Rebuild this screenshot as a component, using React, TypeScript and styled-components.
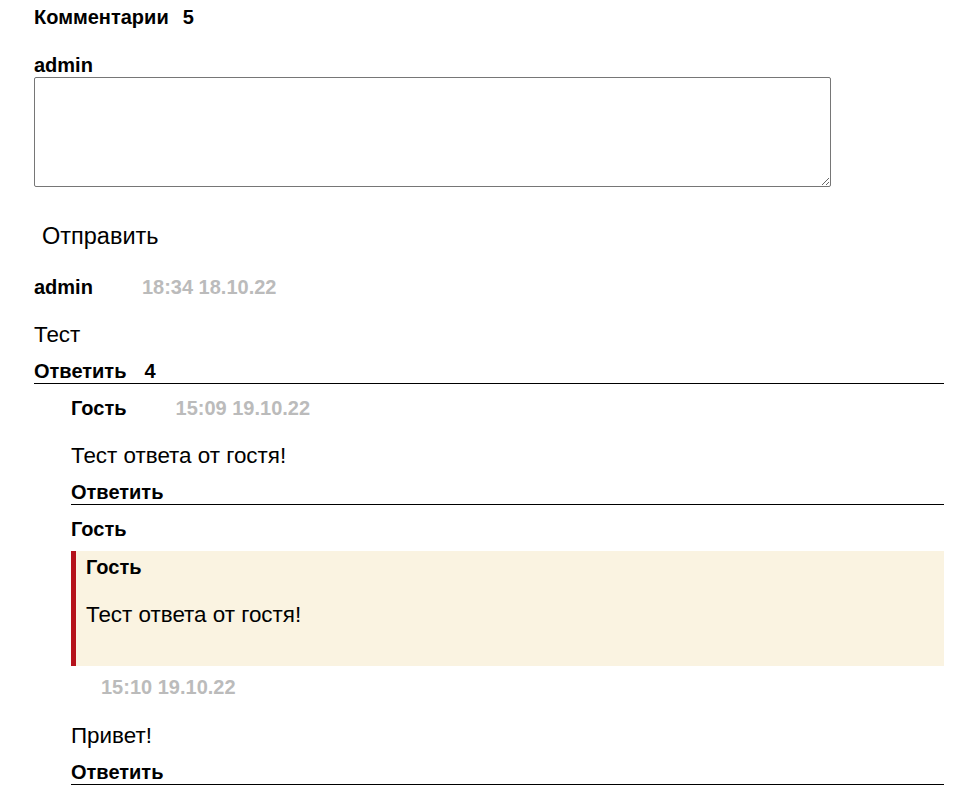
import React from "react";
import styled, { createGlobalStyle } from "styled-components";

const Global = createGlobalStyle`
  html, body { margin: 0; padding: 0; background: #fff; }
  body { font-family: "Liberation Sans", Arial, sans-serif; color: #000; }
`;

const Page = styled.div`
  padding: 5px 12px 0 34px;
`;

const Heading = styled.h3`
  margin: 0;
  font-size: 20px;
  font-weight: bold;
  line-height: 24px;
  display: flex;
  gap: 14px;
`;

const Form = styled.form`
  margin-top: 24px;
  display: flex;
  flex-direction: column;
  align-items: flex-start;
`;

const Label = styled.label`
  font-size: 20px;
  font-weight: bold;
  line-height: 24px;
`;

const TextArea = styled.textarea`
  display: block;
  width: 797px;
  height: 110px;
  box-sizing: border-box;
  border: 1px solid #767676;
  border-radius: 2px;
  font-family: inherit;
  margin: 0;
`;

const SendButton = styled.button`
  margin-top: 35px;
  background: transparent;
  border: none;
  padding: 0 0 0 8px;
  font-family: inherit;
  font-size: 23.5px;
  line-height: 28px;
  color: #000;
`;

const Comment = styled.div<{ $indent?: boolean; $gap: number }>`
  margin-left: ${(p) => (p.$indent ? "37px" : "0")};
  margin-top: ${(p) => p.$gap}px;
`;

const Meta = styled.div<{ $gap?: number; $pad?: number }>`
  display: flex;
  align-items: baseline;
  gap: 49px;
  font-size: 20px;
  font-weight: bold;
  line-height: 24px;
  margin-top: ${(p) => p.$gap ?? 0}px;
  padding-left: ${(p) => p.$pad ?? 0}px;
`;

const Author = styled.span``;

const Time = styled.span`
  color: #bbb;
`;

const Body = styled.p<{ $gap: number }>`
  margin: ${(p) => p.$gap}px 0 0;
  font-size: 22.4px;
  line-height: 26px;
`;

const ReplyBar = styled.div<{ $gap: number }>`
  display: flex;
  gap: 18px;
  margin-top: ${(p) => p.$gap}px;
  font-size: 20px;
  font-weight: bold;
  line-height: 24px;
  border-bottom: 1px solid #000;
`;

const Quote = styled.blockquote`
  margin: 10px 0 0;
  background: #faf3e1;
  border-left: 5px solid #b5121b;
  padding: 4px 0 38px 10px;
`;

const QuoteAuthor = styled.div`
  font-size: 20px;
  font-weight: bold;
  line-height: 24px;
`;

export default function App() {
  return (
    <>
      <Global />
      <Page>
        <Heading>
          <span>Комментарии</span>
          <span>5</span>
        </Heading>
        <Form onSubmit={(e) => e.preventDefault()}>
          <Label>admin</Label>
          <TextArea />
          <SendButton type="submit">Отправить</SendButton>
        </Form>
        <Comment $gap={25}>
          <Meta>
            <Author>admin</Author>
            <Time>18:34 18.10.22</Time>
          </Meta>
          <Body $gap={23}>Тест</Body>
          <ReplyBar $gap={11}>
            <span>Ответить</span>
            <span>4</span>
          </ReplyBar>
        </Comment>
        <Comment $indent $gap={12}>
          <Meta>
            <Author>Гость</Author>
            <Time>15:09 19.10.22</Time>
          </Meta>
          <Body $gap={23}>Тест ответа от гостя!</Body>
          <ReplyBar $gap={11}>
            <span>Ответить</span>
          </ReplyBar>
        </Comment>
        <Comment $indent $gap={12}>
          <Meta>
            <Author>Гость</Author>
          </Meta>
          <Quote>
            <QuoteAuthor>Гость</QuoteAuthor>
            <Body $gap={23}>Тест ответа от гостя!</Body>
          </Quote>
          <Meta $gap={9} $pad={30}>
            <Time>15:10 19.10.22</Time>
          </Meta>
          <Body $gap={24}>Привет!</Body>
          <ReplyBar $gap={11}>
            <span>Ответить</span>
          </ReplyBar>
        </Comment>
      </Page>
    </>
  );
}
